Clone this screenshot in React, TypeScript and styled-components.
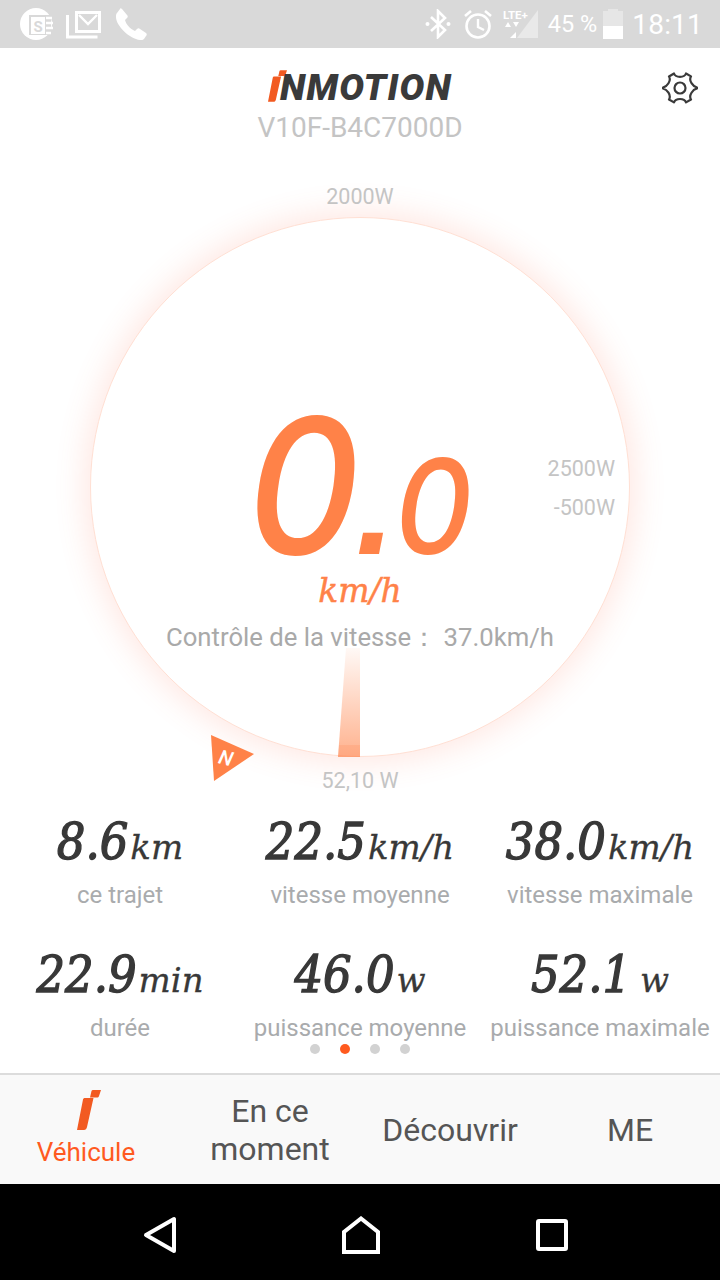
import React from 'react';
import styled, { createGlobalStyle } from 'styled-components';

const GlobalStyle = createGlobalStyle`
  html, body {
    margin: 0;
    padding: 0;
    background: #fff;
    font-family: Roboto, "Liberation Sans", sans-serif;
  }
`;

const Screen = styled.div`
  width: 720px;
  height: 1280px;
  display: flex;
  flex-direction: column;
  overflow: hidden;
  background: #fff;
`;

const StatusBar = styled.div`
  height: 48px;
  flex: none;
  background: #d9d9d9;
  color: #fff;
  display: flex;
  align-items: center;
  justify-content: space-between;
  padding: 0 17px 0 20px;
`;

const StatusGroup = styled.div`
  display: flex;
  align-items: center;
`;

const BatteryText = styled.span`
  font-size: 23.5px;
  margin: 0 6px 0 9px;
`;

const Clock = styled.span`
  font-size: 28px;
  margin-left: 9px;
  letter-spacing: 0.2px;
`;

const Header = styled.header`
  position: relative;
  height: 100px;
  flex: none;
  display: flex;
  flex-direction: column;
  align-items: center;
  padding-top: 20px;
  box-sizing: border-box;
`;

const Logo = styled.div`
  display: flex;
  align-items: center;
  height: 36px;
`;

const LogoText = styled.span`
  font-family: Roboto, sans-serif;
  font-weight: 900;
  font-style: italic;
  font-size: 37px;
  line-height: 36px;
  color: #3a3a3a;
  letter-spacing: 1.2px;
  margin: 3px 0 0 -7px;
`;

const DeviceName = styled.div`
  font-size: 28px;
  line-height: 32px;
  margin-top: 8px;
  color: #c4c4c4;
`;

const SettingsButton = styled.div`
  position: absolute;
  right: 22px;
  top: 22px;
  width: 36px;
  height: 36px;
`;

const GaugeArea = styled.section`
  height: 660px;
  flex: none;
  display: flex;
  justify-content: center;
  padding-top: 69px;
  box-sizing: border-box;
`;

const Dial = styled.div`
  position: relative;
  width: 540px;
  height: 540px;
  border-radius: 50%;
  background: #fff;
  box-sizing: border-box;
  border: 1px solid #ffe0d4;
  box-shadow: 0 0 30px 6px rgba(255, 110, 80, 0.16);
  display: flex;
  flex-direction: column;
  align-items: center;
  padding-top: 183px;
`;

const ScaleLabel = styled.span<{ $top: number; $right?: number }>`
  position: absolute;
  top: ${(p) => p.$top}px;
  ${(p) => (p.$right === undefined ? 'left: 0; right: 0; text-align: center;' : `right: ${p.$right}px;`)}
  font-size: 21.5px;
  line-height: 26px;
  color: #c4c4c4;
`;

const Speed = styled.div`
  display: flex;
  align-items: baseline;
  font-family: Inter, Roboto, sans-serif;
  font-style: italic;
  font-weight: 500;
  color: #ff8248;
  height: 170px;
  line-height: 170px;
  margin-left: 2px;
`;

const SpeedWhole = styled.span`
  font-size: 188px;
  letter-spacing: -4px;
  transform: translateX(-3px) scaleX(0.93);
`;

const SpeedDot = styled.span`
  font-family: "Liberation Sans", sans-serif;
  font-size: 142px;
  font-weight: 700;
  margin: 0 -4px 0 -7px;
`;

const SpeedFraction = styled.span`
  font-size: 132px;
  transform: scaleX(0.91);
`;

const SpeedUnit = styled.div`
  font-family: "DejaVu Serif", serif;
  font-style: italic;
  font-size: 33px;
  line-height: 36px;
  margin-top: 2px;
  color: #ff8248;
  -webkit-text-stroke: 0.5px #ff8248;
`;

const SpeedLimit = styled.div`
  font-size: 25.7px;
  line-height: 30px;
  margin-top: 13px;
  color: #a9a9a9;
  white-space: nowrap;
`;

const Needle = styled.svg`
  position: absolute;
  left: 246px;
  top: 430px;
`;

const Heading = styled.svg`
  position: absolute;
  left: 119px;
  top: 516px;
`;

const StatsGrid = styled.div`
  display: grid;
  grid-template-columns: repeat(3, 240px);
  grid-template-rows: 133px 115px;
  height: 248px;
  flex: none;
  margin-top: 2px;
`;

const Stat = styled.div`
  display: flex;
  flex-direction: column;
  align-items: center;
  white-space: nowrap;
`;

const StatValue = styled.div`
  font-family: "DejaVu Serif Condensed", "DejaVu Serif", serif;
  font-style: italic;
  font-weight: 400;
  font-size: 50px;
  line-height: 64px;
  height: 64px;
  color: #383838;
  -webkit-text-stroke: 1.3px #383838;
`;

const StatUnit = styled.span`
  font-family: "DejaVu Serif", serif;
  font-size: 34px;
  margin-left: 2px;
  -webkit-text-stroke: 0.3px #383838;
`;

const StatLabel = styled.div`
  font-size: 24px;
  line-height: 30px;
  margin-top: 6px;
  color: #a9abad;
`;

const PagerDots = styled.div`
  display: flex;
  justify-content: center;
  gap: 20px;
  height: 10px;
  flex: none;
  margin-top: -14px;
`;

const Dot = styled.span<{ $active?: boolean }>`
  width: 10px;
  height: 10px;
  border-radius: 50%;
  background: ${(p) => (p.$active ? '#ff5a1f' : '#d2d2d2')};
`;

const TabBar = styled.nav`
  margin-top: 19px;
  height: 111px;
  flex: none;
  box-sizing: border-box;
  border-top: 2px solid #dcdcdc;
  background: #f9f9f9;
  display: grid;
  grid-template-columns: repeat(4, 180px);
`;

const Tab = styled.div<{ $active?: boolean }>`
  display: flex;
  flex-direction: column;
  align-items: center;
  justify-content: center;
  text-align: center;
  font-size: ${(p) => (p.$active ? 26 : 32)}px;
  line-height: ${(p) => (p.$active ? 30 : 38)}px;
  color: ${(p) => (p.$active ? '#ff5a1f' : '#555')};
  ${(p) => p.$active && 'padding: 0 8px 2px 0;'}
`;

const TabMark = styled.div`
  display: flex;
  margin: 0 0 7px 6px;
`;

const SystemNav = styled.div`
  flex: 1;
  background: #000;
  display: grid;
  grid-template-columns: 320px 82px 300px;
  align-items: center;
  justify-items: center;
  padding-top: 6px;
`;

const NavSlot = styled.div`
  display: flex;
`;

const SimCircleIcon = () => (
  <svg width="34" height="34" viewBox="0 0 34 34" style={{ marginRight: 12 }}>
    <circle cx="16" cy="17" r="16" fill="#fff" />
    <rect x="9" y="8" width="22" height="20" fill="#d9d9d9" />
    <rect x="11" y="10" width="14" height="17" fill="#fff" />
    <text x="18" y="25" textAnchor="middle" fontFamily="Roboto" fontWeight="700" fontSize="15" fill="#d9d9d9">S</text>
    <path d="M26 11h6M26 16h7M26 21h7M26 26h5" stroke="#fff" strokeWidth="2.4" />
  </svg>
);

const MailStackIcon = () => (
  <svg width="36" height="30" viewBox="0 0 36 30" style={{ marginRight: 13 }}>
    <path d="M1.5 6v22h30" fill="none" stroke="#fff" strokeWidth="3" />
    <path d="M9 2h26v22H9z" fill="#fff" />
    <path d="M12 5h20v16H12z" fill="#d9d9d9" />
    <path d="M13 6l9 9 9-9" fill="none" stroke="#fff" strokeWidth="2.4" />
  </svg>
);

const PhoneIcon = () => (
  <svg width="32" height="32" viewBox="0 0 32 32">
    <path
      d="M7 1l5 6c1 1 1 2 0 3l-2 2c1 4 5 9 10 11l2-2c1-1 2-1 3 0l6 4c1 1 1 2 0 3l-2 3c-1 1-2 1-4 1C15 31 1 18 1 9c0-2 0-3 1-4l3-4c0-1 1-1 2 0z"
      fill="#fff"
    />
  </svg>
);

const BluetoothIcon = () => (
  <svg width="26" height="30" viewBox="0 0 26 30" style={{ marginRight: 12 }}>
    <path d="M6 8l14 13-7 7V2l7 7L6 22" fill="none" stroke="#fff" strokeWidth="2.6" />
    <circle cx="2.5" cy="15" r="2" fill="#fff" />
    <circle cx="23.5" cy="15" r="2" fill="#fff" />
  </svg>
);

const AlarmIcon = () => (
  <svg width="30" height="30" viewBox="0 0 30 30" style={{ marginRight: 10 }}>
    <circle cx="15" cy="17" r="11.5" fill="none" stroke="#fff" strokeWidth="2.6" />
    <path d="M15 10v8l6 3" fill="none" stroke="#fff" strokeWidth="2.4" />
    <path d="M2 7l6-5M28 7l-6-5" fill="none" stroke="#fff" strokeWidth="2.6" />
  </svg>
);

const SignalIcon = () => (
  <svg width="36" height="30" viewBox="0 0 36 30">
    <text x="0" y="10" fontFamily="Roboto" fontWeight="700" fontSize="11.5" fill="#fff">LTE+</text>
    <path d="M2 18l3-5 3 5zM10 13l3 5 3-5z" fill="#fff" />
    <path d="M7 29l6-6v6z" fill="#fff" />
    <path d="M14 29l21-28v28z" fill="#e9e9e9" />
  </svg>
);

const BatteryIcon = () => (
  <svg width="20" height="30" viewBox="0 0 20 30">
    <path d="M5 0h10v2h5v28H0V2h5z" fill="#e6e6e6" />
    <rect y="17" width="20" height="13" fill="#fff" />
  </svg>
);

// same orange stroke-and-tick mark is used in the logo and on the vehicle tab
const BrandMark = ({ width, height }: { width: number; height: number }) => (
  <svg width={width} height={height} viewBox="0 0 24 40">
    <path d="M6 9.5c.2-1 1-1.5 2-1.5h8.5L10 37c-.4 2-1.5 3-3 3H0z" fill="#f25a21" />
    <path d="M14.5 1c.2-.6.7-1 1.5-1h8l-2 6c-.3 1-1 1.5-2 1.5h-7z" fill="#f25a21" />
  </svg>
);

const GearIcon = () => (
  <SettingsButton>
    <svg width="36" height="36" viewBox="0 0 36 36" fill="none" stroke="#3a3a3a" strokeWidth="2.2" strokeLinejoin="round">
      <path d="M12 3.5c1 2.8 3.5 3.4 6 3.4s5-.6 6-3.4l5 2.9c-1.6 2.6-.8 4.7.5 6.8 1.2 2 2.9 3.6 5.5 4.3v.9c-2.6.7-4.3 2.3-5.5 4.3-1.3 2.1-2.1 4.2-.5 6.8l-5 2.9c-1-2.8-3.5-3.4-6-3.4s-5 .6-6 3.4l-5-2.9c1.6-2.6.8-4.7-.5-6.8C5.3 20.8 3.6 19.2 1 18.5v-.9c2.6-.7 4.3-2.3 5.5-4.3 1.3-2.1 2.1-4.2.5-6.8z" />
      <circle cx="18" cy="18" r="5.5" />
    </svg>
  </SettingsButton>
);

const stats = [
  { value: '8.6', unit: 'km', label: 'ce trajet' },
  { value: '22.5', unit: 'km/h', label: 'vitesse moyenne' },
  { value: '38.0', unit: 'km/h', label: 'vitesse maximale' },
  { value: '22.9', unit: 'min', label: 'durée' },
  { value: '46.0', unit: 'w', label: 'puissance moyenne' },
  { value: '52.1', unit: '\u2009w', label: 'puissance maximale' },
];

const App: React.FC = () => (
  <Screen>
    <GlobalStyle />

    <StatusBar>
      <StatusGroup>
        <SimCircleIcon />
        <MailStackIcon />
        <PhoneIcon />
      </StatusGroup>
      <StatusGroup>
        <BluetoothIcon />
        <AlarmIcon />
        <SignalIcon />
        <BatteryText>45 %</BatteryText>
        <BatteryIcon />
        <Clock>18:11</Clock>
      </StatusGroup>
    </StatusBar>

    <Header>
      <Logo>
        <BrandMark width={19} height={32} />
        <LogoText>NMOTION</LogoText>
      </Logo>
      <DeviceName>V10F-B4C7000D</DeviceName>
      <GearIcon />
    </Header>

    <GaugeArea>
      <Dial>
        <ScaleLabel $top={-34}>2000W</ScaleLabel>
        <ScaleLabel $top={238} $right={14}>2500W</ScaleLabel>
        <ScaleLabel $top={277} $right={14}>-500W</ScaleLabel>

        <Speed>
          <SpeedWhole>0</SpeedWhole>
          <SpeedDot>.</SpeedDot>
          <SpeedFraction>0</SpeedFraction>
        </Speed>
        <SpeedUnit>km/h</SpeedUnit>
        <SpeedLimit>Contrôle de la vitesse： 37.0km/h</SpeedLimit>

        <Needle width="24" height="110" viewBox="0 0 24 110">
          <defs>
            <linearGradient id="needleFade" x1="0" y1="0" x2="0" y2="1">
              <stop offset="0" stopColor="#ff8248" stopOpacity="0.05" />
              <stop offset="1" stopColor="#ff8248" stopOpacity="0.62" />
            </linearGradient>
          </defs>
          <path d="M9 0h14v109H1z" fill="url(#needleFade)" />
          <path d="M2 97h21v12H1z" fill="#ff8248" fillOpacity="0.18" />
        </Needle>

        <Heading width="46" height="48" viewBox="0 0 46 48">
          <path d="M1 1l43 19L4 47z" fill="#ff8248" />
          <text x="9" y="31" fontFamily="Roboto" fontStyle="italic" fontWeight="500" fontSize="20" fill="#fff" transform="rotate(14 16 24)">N</text>
        </Heading>

        <ScaleLabel $top={550}>52,10 W</ScaleLabel>
      </Dial>
    </GaugeArea>

    <StatsGrid>
      {stats.map((stat) => (
        <Stat key={stat.label}>
          <StatValue>
            {stat.value}
            <StatUnit>{stat.unit}</StatUnit>
          </StatValue>
          <StatLabel>{stat.label}</StatLabel>
        </Stat>
      ))}
    </StatsGrid>

    <PagerDots>
      <Dot />
      <Dot $active />
      <Dot />
      <Dot />
    </PagerDots>

    <TabBar>
      <Tab $active>
        <TabMark>
          <BrandMark width={24} height={40} />
        </TabMark>
        <span>Véhicule</span>
      </Tab>
      <Tab>En ce moment</Tab>
      <Tab>Découvrir</Tab>
      <Tab>ME</Tab>
    </TabBar>

    <SystemNav>
      <NavSlot>
        <svg width="34" height="38" viewBox="0 0 34 38" fill="none" stroke="#fff" strokeWidth="4" strokeLinejoin="round">
          <path d="M31 3v32L3 19z" />
        </svg>
      </NavSlot>
      <NavSlot>
        <svg width="38" height="38" viewBox="0 0 38 38" fill="none" stroke="#fff" strokeWidth="4">
          <path d="M2 36V16L19 2.5 36 16v20z" />
        </svg>
      </NavSlot>
      <NavSlot>
        <svg width="32" height="32" viewBox="0 0 32 32" fill="none" stroke="#fff" strokeWidth="4">
          <rect x="2" y="2" width="28" height="28" rx="1" />
        </svg>
      </NavSlot>
    </SystemNav>
  </Screen>
);

export default App;
